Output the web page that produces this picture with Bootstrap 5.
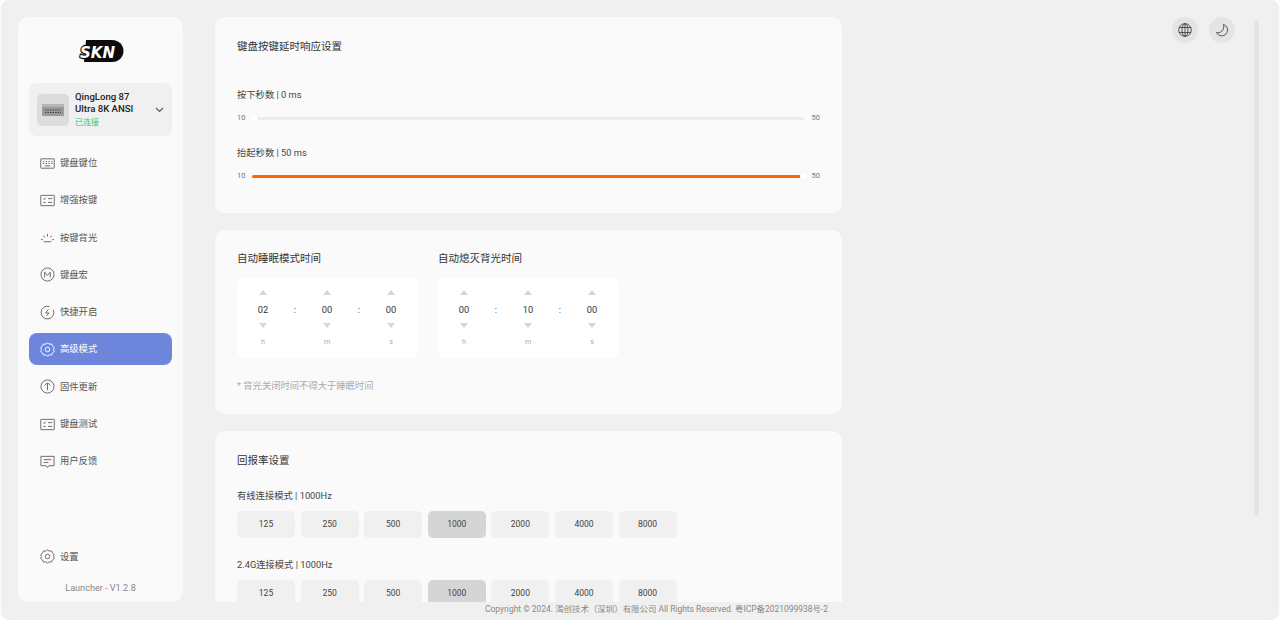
<!DOCTYPE html>
<html lang="zh-CN">
<head>
<meta charset="utf-8">
<title>SKN Launcher</title>
<link href="https://cdn.jsdelivr.net/npm/bootstrap@5.3.0/dist/css/bootstrap.min.css" rel="stylesheet">
<style>
html,body{height:620px;overflow:hidden;background:#fdfdfd}
body{font-family:"Roboto","Noto Sans CJK SC",sans-serif;color:#333;font-size:9.3px;line-height:1.3}
.win{width:1276px;height:618px;margin:1px 2px;background:#f0f0f0;border-radius:8px;box-shadow:0 0 2px rgba(0,0,0,.2);position:relative}
.topzone{height:601px;padding:16px 0 0 16px}
.side{width:165px;background:#fafafa;border-radius:10px;padding:22px 11px 0;flex:none}
.logo-wrap{height:22px;margin-bottom:22px}
.device{height:53px;background:#f0f0f0;border-radius:8px;padding:0 8px;margin-bottom:11px}
.thumbbox{width:32px;height:32px;background:#dcdcdc;border-radius:5px;flex:none}
.devtext{margin-left:6px}
.devname{font-size:9.6px;font-weight:500;line-height:11.5px;color:#222}
.online{font-size:8px;color:#2fc774;line-height:11px;margin-top:3px}
.menu{gap:5.3px}
.menu .nav-link{height:32px;border-radius:8px;padding:0 0 0 11px;color:#555;font-size:9.3px;gap:5px;display:flex;align-items:center}
.menu .nav-link.active{background:#6d86dc;color:#fff}
.menu svg,.setrow svg{width:15px;height:15px;flex:none}
.side-bottom{padding-top:63.500px}
.setrow{height:32px;padding-left:11px;gap:5px;color:#555}
.ver{color:#888;font-size:9.1px;margin-top:10.500px;text-align:center}
.cards{width:627px;margin-left:32px;gap:17px;overflow:hidden;flex:none}
.panel{background:#fafafa;border:0;border-radius:10px;padding:0 22px;flex:none}
.p1{height:196px}
.p2{height:184px}
.p3{height:230px}
.ttl{font-size:10.5px;color:#333;line-height:14px}
.p1 .ttl{margin-top:23px;margin-bottom:34px}
.lbl{font-size:9.3px;color:#444;line-height:13px}
.sld{height:12px;margin-top:11px;margin-bottom:22px;font-size:7.5px;color:#777}
.sld .num{width:15px;flex:none}
.sld .num2{width:16px;flex:none;text-align:right}
.rail{flex:1;height:3px;background:#ececec;border-radius:2px;position:relative}
.rail.on{background:#ff6600;margin-right:3px}
.knob{position:absolute;top:-2.500px;width:8px;height:8px;border-radius:50%;background:#fff;box-shadow:0 0 1px rgba(0,0,0,.15)}
.p2 .ttl{margin-bottom:12px}
.tcol{margin-top:22px}
.timer{width:181px;height:80px;background:#fff;border-radius:8px;padding:12px 0 0 0}
.tcol + .tcol{margin-left:20px}
.tu{width:24px;text-align:center}
.arr-u,.arr-d{width:0;height:0;border-left:4px solid transparent;border-right:4px solid transparent;margin:0 auto}
.arr-u{border-bottom:5px solid #d6d6d6}
.arr-d{border-top:5px solid #d6d6d6}
.val{font-size:9.3px;color:#333;line-height:13px;margin:8px 0 7px}
.unit{font-size:7px;color:#aaa;line-height:10px;margin-top:9px}
.sep{width:40px;text-align:center;padding-top:13px;font-size:9.3px;color:#333;line-height:13px}
.timer-row{padding-left:14px}
.tip{font-size:9.3px;color:#aaa;margin-top:21px;line-height:13px}
.p3 .ttl{margin-top:23px;margin-bottom:21px}
.rates{gap:5.6px;margin-top:9px;margin-bottom:20px}
.rates .btn{width:58px;height:27px;padding:0;font-size:8.5px;color:#444;background:#f0f0f0;border:0;border-radius:5px;line-height:27px}
.rates .btn.sel{background:#d5d5d5}
.tools{position:absolute;top:16px;right:43px;gap:11px}
.round{width:26px;height:26px;border-radius:50%;background:#e4e4e4;padding:0;border:0}
.round svg{width:16px;height:16px}
.thumbbar{position:absolute;left:1252px;top:19px;width:5px;height:496px;background:#e4e4e4;border-radius:3px}
.foot{height:17px;font-size:8.45px;line-height:14px;color:#888;padding-left:483px}
.logo-t{paint-order:stroke;stroke-linejoin:round}
</style>
</head>
<body>
<div class="win d-flex flex-column">
  <div class="topzone d-flex">
    <aside class="side d-flex flex-column">
      <div class="logo-wrap d-flex justify-content-center">
        <svg width="46" height="24" viewBox="0 0 46 24">
          <path d="M8 1H34C41 1 45.500 6 45.500 12C45.500 18 41 23 34 23H6Z" fill="#0c0c0c"/>
          <text class="logo-t" x="2" y="18.500" font-family="DejaVu Sans" font-weight="700" font-style="italic" font-size="16" fill="#fff" stroke="#0c0c0c" stroke-width="2.400" textLength="35" lengthAdjust="spacingAndGlyphs">SKN</text>
        </svg>
      </div>
      <div class="device d-flex align-items-center">
        <div class="thumbbox d-flex align-items-center justify-content-center">
          <svg width="22" height="12" viewBox="0 0 22 12"><rect width="22" height="12" rx="1" fill="#9a9a9a"/><rect x="0" y="0" width="22" height="3" fill="#b5b5b5"/><path d="M3 6h16M3 8.500h16" stroke="#444" stroke-width="1.200" stroke-dasharray="1.500 1"/></svg>
        </div>
        <div class="devtext flex-grow-1">
          <div class="devname">QingLong 87<br>Ultra 8K ANSI</div>
          <div class="online">已连接</div>
        </div>
        <svg width="9" height="6" viewBox="0 0 9 6"><path d="M1 1l3.500 3.500L8 1" fill="none" stroke="#555" stroke-width="1.100"/></svg>
      </div>
      <nav class="nav flex-column menu">
        <a class="nav-link" href="#"><svg viewBox="0 0 16 16" fill="none" stroke="#666"><rect x=".8" y="3" width="14.400" height="10" rx=".5"/><path d="M3 6h1.500M6 6h1.500M9 6h1.500M12 6h1.500M3 8h1.500M6 8h1.500M9 8h1.500M12 8h1.500M5 10.500h6"/></svg>键盘键位</a>
        <a class="nav-link" href="#"><svg viewBox="0 0 16 16" fill="none" stroke="#666"><rect x=".8" y="2.500" width="14.400" height="11" rx=".5"/><path d="M3.500 6l1 1 1.500-2M3.500 10h2.500M8.500 6h4.500M8.500 10h4.500"/></svg>增强按键</a>
        <a class="nav-link" href="#"><svg viewBox="0 0 16 16" fill="none" stroke="#666"><path d="M4 12.500h8M8 4v3M3.500 6l1.500 2M12.500 6l-1.500 2M1 10l2 .5M15 10l-2 .5"/></svg>按键背光</a>
        <a class="nav-link" href="#"><svg viewBox="0 0 16 16" fill="none" stroke="#666"><circle cx="8" cy="8" r="7"/><path d="M5 11V5.500L8 9l3-3.500V11"/></svg>键盘宏</a>
        <a class="nav-link" href="#"><svg viewBox="0 0 16 16" fill="none" stroke="#666"><path d="M10 1.600A6.800 6.800 0 1 0 14 5M6 1.600"/><path d="M9 4.500L6 8.500h3.500L7 11.500" stroke-linejoin="round"/></svg>快捷开启</a>
        <a class="nav-link active" href="#"><svg viewBox="0 0 16 16" fill="none" stroke="#fff"><circle cx="8" cy="8" r="2.400"/><path d="M8 1l2 1.300 2.400-.2.900 2.200 1.900 1.500-.7 2.200.7 2.200-1.900 1.500-.9 2.200-2.400-.2L8 15l-2-1.300-2.400.2-.9-2.200L.8 10.200 1.500 8 .8 5.800l1.900-1.500.9-2.200 2.400.2z"/></svg>高级模式</a>
        <a class="nav-link" href="#"><svg viewBox="0 0 16 16" fill="none" stroke="#666"><circle cx="8" cy="8" r="7"/><path d="M8 12V4.500M5 7l3-3 3 3"/></svg>固件更新</a>
        <a class="nav-link" href="#"><svg viewBox="0 0 16 16" fill="none" stroke="#666"><rect x=".8" y="2.500" width="14.400" height="11" rx=".5"/><path d="M3.500 6l1 1 1.500-2M3.500 10h2.500M8.500 6h4.500M8.500 10h4.500"/></svg>键盘测试</a>
        <a class="nav-link" href="#"><svg viewBox="0 0 16 16" fill="none" stroke="#666"><path d="M1 2.500h14v10H9.500L8 14.500l-1.500-2H1z"/><path d="M4 6h8M4 9h5"/></svg>用户反馈</a>
      </nav>
      <div class="side-bottom">
        <div class="setrow d-flex align-items-center"><svg viewBox="0 0 16 16" fill="none" stroke="#666"><circle cx="8" cy="8" r="2.400"/><path d="M8 1l2 1.300 2.400-.2.900 2.200 1.900 1.500-.7 2.200.7 2.200-1.900 1.500-.9 2.200-2.400-.2L8 15l-2-1.300-2.400.2-.9-2.200L.8 10.200 1.500 8 .8 5.800l1.900-1.500.9-2.200 2.400.2z"/></svg>设置</div>
        <div class="ver">Launcher - V1.2.8</div>
      </div>
    </aside>

    <main class="cards d-flex flex-column">
      <section class="card panel p1">
        <div class="ttl">键盘按键延时响应设置</div>
        <div class="lbl">按下秒数 | 0 ms</div>
        <div class="sld d-flex align-items-center">
          <span class="num">10</span>
          <div class="rail"><span class="knob" style="left:-2px"></span></div>
          <span class="num2">50</span>
        </div>
        <div class="lbl">抬起秒数 | 50 ms</div>
        <div class="sld d-flex align-items-center">
          <span class="num">10</span>
          <div class="rail on"><span class="knob" style="right:-7px"></span></div>
          <span class="num2">50</span>
        </div>
      </section>

      <section class="card panel p2">
        <div class="d-flex">
          <div class="tcol">
            <div class="ttl">自动睡眠模式时间</div>
            <div class="timer"><div class="d-flex timer-row">
              <div class="tu"><div class="arr-u"></div><div class="val">02</div><div class="arr-d"></div><div class="unit">h</div></div>
              <div class="sep">:</div>
              <div class="tu"><div class="arr-u"></div><div class="val">00</div><div class="arr-d"></div><div class="unit">m</div></div>
              <div class="sep">:</div>
              <div class="tu"><div class="arr-u"></div><div class="val">00</div><div class="arr-d"></div><div class="unit">s</div></div>
            </div></div>
          </div>
          <div class="tcol">
            <div class="ttl">自动熄灭背光时间</div>
            <div class="timer"><div class="d-flex timer-row">
              <div class="tu"><div class="arr-u"></div><div class="val">00</div><div class="arr-d"></div><div class="unit">h</div></div>
              <div class="sep">:</div>
              <div class="tu"><div class="arr-u"></div><div class="val">10</div><div class="arr-d"></div><div class="unit">m</div></div>
              <div class="sep">:</div>
              <div class="tu"><div class="arr-u"></div><div class="val">00</div><div class="arr-d"></div><div class="unit">s</div></div>
            </div></div>
          </div>
        </div>
        <div class="tip">* 背光关闭时间不得大于睡眠时间</div>
      </section>

      <section class="card panel p3">
        <div class="ttl">回报率设置</div>
        <div class="lbl">有线连接模式 | 1000Hz</div>
        <div class="rates d-flex">
          <button class="btn">125</button><button class="btn">250</button><button class="btn">500</button><button class="btn sel">1000</button><button class="btn">2000</button><button class="btn">4000</button><button class="btn">8000</button>
        </div>
        <div class="lbl">2.4G连接模式 | 1000Hz</div>
        <div class="rates d-flex">
          <button class="btn">125</button><button class="btn">250</button><button class="btn">500</button><button class="btn sel">1000</button><button class="btn">2000</button><button class="btn">4000</button><button class="btn">8000</button>
        </div>
      </section>
    </main>
  </div>
  <footer class="foot">Copyright © 2024. 渴创技术（深圳）有限公司 All Rights Reserved. 粤ICP备2021099938号-2</footer>

  <div class="tools d-flex">
    <button class="btn round d-flex align-items-center justify-content-center" aria-label="语言"><svg viewBox="0 0 16 16" fill="none" stroke="#444" stroke-width=".9"><circle cx="8" cy="8" r="6.300"/><ellipse cx="8" cy="8" rx="3" ry="6.300"/><path d="M8 1.700v12.600M2 5.500h12M2 10.500h12"/></svg></button>
    <button class="btn round d-flex align-items-center justify-content-center" aria-label="深色模式"><svg viewBox="0 0 16 16" fill="none" stroke="#444" stroke-width=".9"><path d="M9.500 2.500A5.800 5.800 0 1 1 2.500 10.500C6 12 11 8 9.500 2.500z" stroke-linejoin="round"/></svg></button>
  </div>
  <div class="thumbbar"></div>
</div>
</body>
</html>
